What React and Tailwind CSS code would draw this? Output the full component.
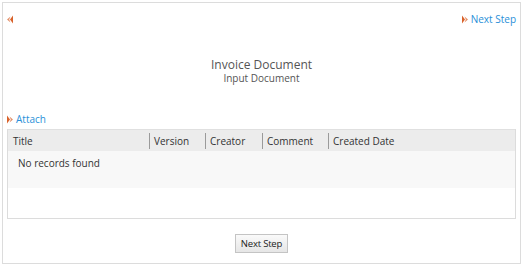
function Arrow({ dir = 'right' }) {
  return (
    <svg width="6" height="9" viewBox="0 0 6 9" className="shrink-0">
      {dir === 'right' ? (
        <g fill="#d9622b">
          <path d="M0 0.5 L3 4.5 L0 8.5 Z" />
          <path d="M2.5 1.5 L6 4.5 L2.5 7.5 L3.8 4.5 Z" opacity="0.7" />
        </g>
      ) : (
        <g fill="#d9622b">
          <path d="M6 0.5 L3 4.5 L6 8.5 Z" />
          <path d="M3.5 1.5 L0 4.5 L3.5 7.5 L2.2 4.5 Z" opacity="0.7" />
        </g>
      )}
    </svg>
  )
}

const cols = [
  { label: 'Title', w: 'w-[141px]' },
  { label: 'Version', w: 'w-[56px]' },
  { label: 'Creator', w: 'w-[57px]' },
  { label: 'Comment', w: 'w-[66px]' },
  { label: 'Created Date', w: 'flex-1' },
]

export default function App() {
  return (
    <div className="w-[523px] h-[265px] bg-white p-[2px] font-['Open_Sans',sans-serif] text-[10px] text-[#333]">
      <div className="h-[262px] w-[519px] border border-[#dcdcdc] flex flex-col">
        <div className="flex items-center justify-between pl-[4px] pr-[4px] pt-[8px] h-[24px]">
          <Arrow dir="left" />
          <a className="flex items-center gap-[3px] text-[#2a8fd8] text-[10px]">
            <Arrow />
            Next Step
          </a>
        </div>
        <div className="flex flex-col items-center mt-[31px] text-[#555]">
          <div className="text-[12px] leading-[14px]">Invoice Document</div>
          <div className="text-[10px] leading-[13px]">Input Document</div>
        </div>
        <a className="flex items-center gap-[3px] pl-[4px] mt-[27px] text-[#2a8fd8] text-[10px] leading-[14px]">
          <Arrow />
          Attach
        </a>
        <div className="mx-[4px] mt-[3px] h-[90px] border border-[#dcdcdc] border-t-0">
          <div className="flex h-[22px] items-center bg-[#ececec] border-t border-[#e0e0e0] pt-px">
            {cols.map((c, i) => (
              <div key={c.label} className={`${c.w} flex items-center h-full`}>
                {i > 0 && <span className="w-px h-[16px] bg-[#9a9a9a] mr-[4px]" />}
                <span className={i === 0 ? 'pl-[5px]' : ''}>{c.label}</span>
              </div>
            ))}
          </div>
          <div className="h-[37px] bg-[#f8f8f8] pl-[10px] pt-[3px] leading-[18px]">No records found</div>
        </div>
        <div className="flex justify-center mt-[15px]">
          <button className="h-[19px] w-[53px] border border-[#c4c4c4] bg-gradient-to-b from-[#fafafa] to-[#e6e6e6] text-[9.5px] text-[#222] leading-none tracking-[-0.2px]">
            Next Step
          </button>
        </div>
      </div>
    </div>
  )
}
